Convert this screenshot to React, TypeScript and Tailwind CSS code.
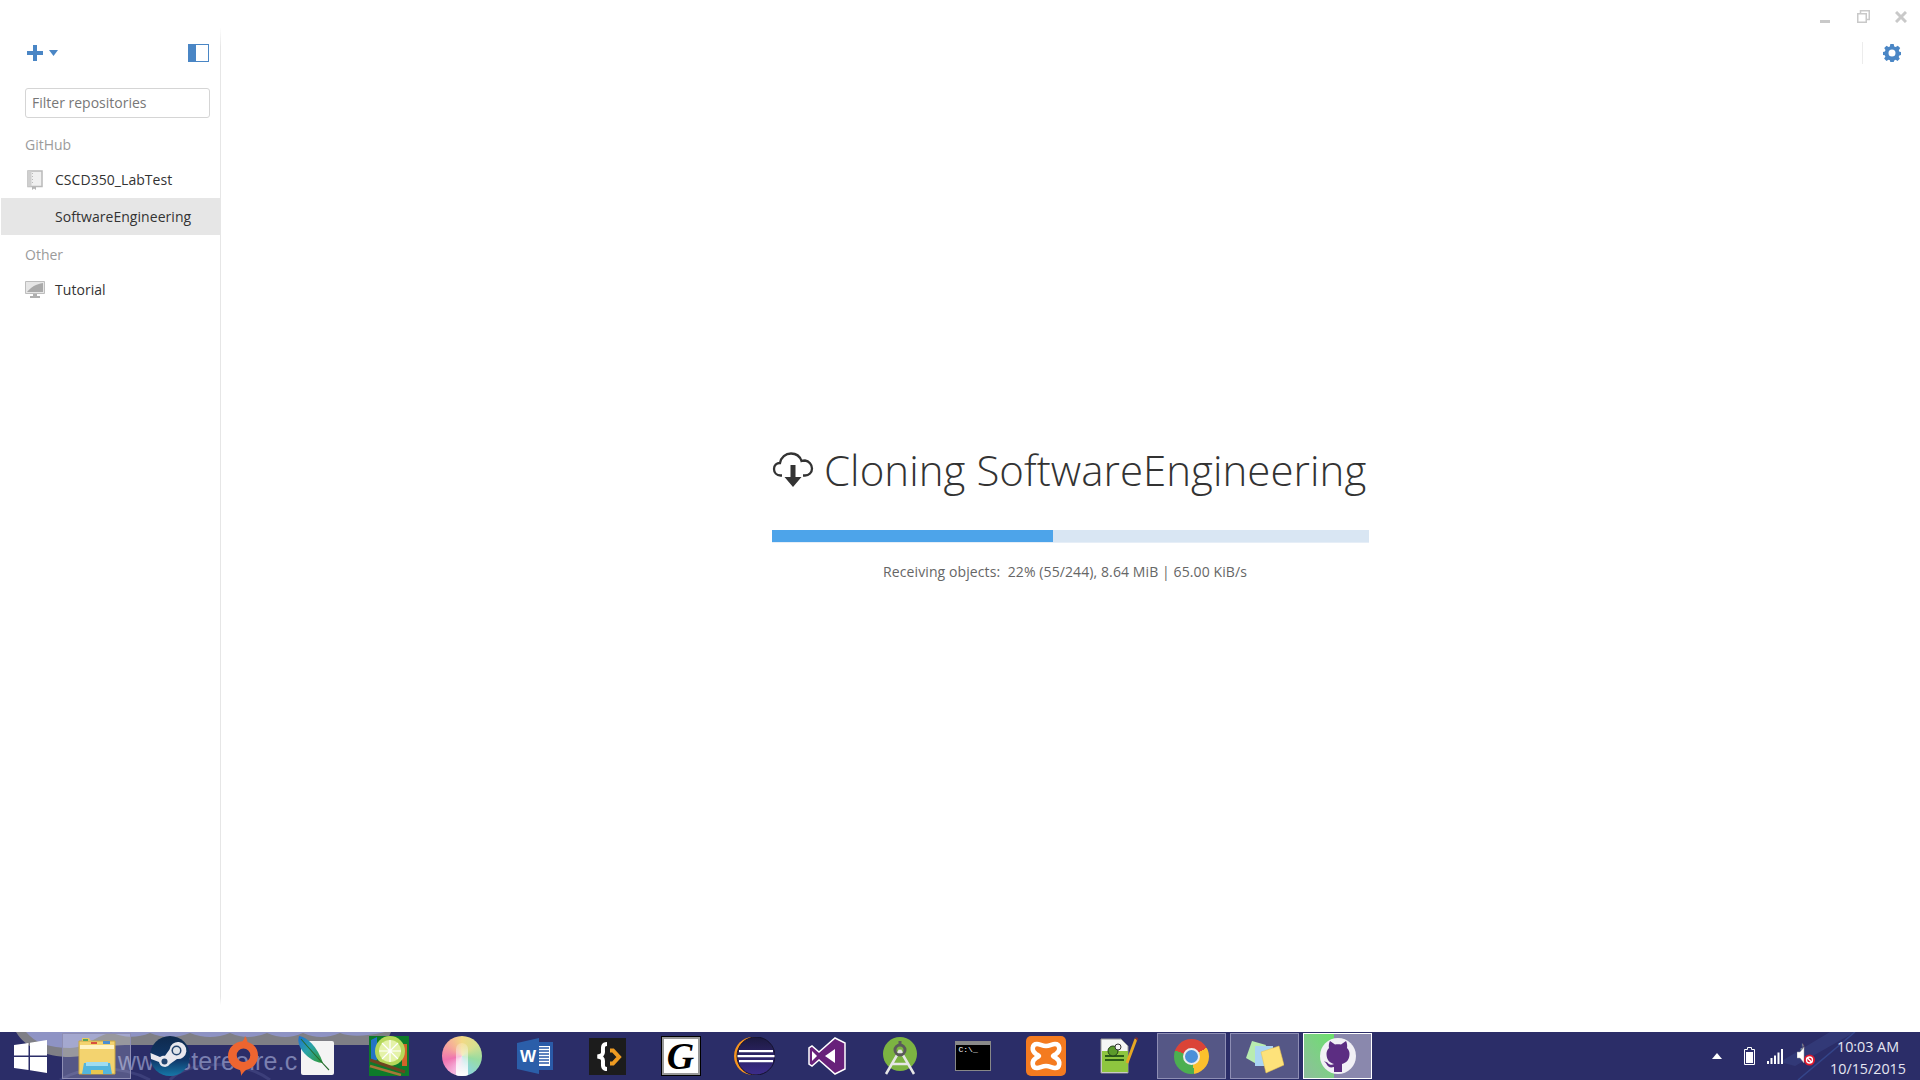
const sans = { fontFamily: '"Open Sans", sans-serif' };

function CloudIcon() {
  return (
    <svg width="42" height="38" viewBox="0 0 42 38" fill="none">
      <path d="M10 24.500H8.500C4.500 24.500 2 21.500 2 18C2 14.500 4.500 12 8 12C9 6.500 13.500 2.500 19 2.500C24 2.500 28 5.500 29.500 10C30.500 9.600 31.500 9.500 33 9.500C37 10 40 13.500 40 17.500C40 21.500 37 24.500 33 24.500H31" stroke="#333" strokeWidth="2.300" />
      <path d="M18.500 14H23.500V26H29.500L21 36L12.500 26H18.500Z" fill="#333" />
    </svg>
  );
}

function GearIcon() {
  return (
    <svg width="18" height="18" viewBox="0 0 18 18" fill="#4a86c5">
      <path fillRule="evenodd" d="M7.300 0H10.700L11.200 2.500L12.700 3.100L14.800 1.700L17.200 4.100L15.800 6.200L16.400 7.700L18 8V11L16.300 11.400L15.700 12.900L16.800 14.700L14.500 17L12.700 15.800L11.200 16.400L10.700 18H7.300L6.900 16.300L5.400 15.700L3.500 17L1.100 14.600L2.400 12.800L1.800 11.300L0 11V8L1.900 7.500L2.500 6L1.200 4.100L3.600 1.700L5.500 3L6.900 2.400ZM9 5.500A3.500 3.500 0 1 0 9 12.500A3.500 3.500 0 1 0 9 5.500Z" />
    </svg>
  );
}

function BookIcon() {
  return (
    <svg width="16" height="20" viewBox="0 0 16 20">
      <path d="M1 1H15V16.500H1Z" fill="#f0f0f0" stroke="#b9b9b9" strokeWidth="1.500" />
      <path d="M1 1H4.500V16.500H1Z" fill="#cfcfcf" />
      <path d="M5.500 3V13" stroke="#bbb" strokeDasharray="1 2" />
      <path d="M5 17H9V20L7 18.500L5 20Z" fill="#b5b5b5" />
    </svg>
  );
}

function MonitorIcon() {
  return (
    <svg width="20" height="18" viewBox="0 0 20 18">
      <path d="M0.500 0.500H19.500V12.500H0.500Z" fill="#e6e6e6" stroke="#bdbdbd" />
      <path d="M2 11C6 6 11 3 18 2V11Z" fill="#a9a9a9" />
      <path d="M8 13H12V15H15V17H5V15H8Z" fill="#b0b0b0" />
    </svg>
  );
}

function WindowsLogo() {
  return (
    <svg width="33" height="33" viewBox="0 0 33 33" fill="#fff">
      <path d="M0 5L14.500 3V15.500H0ZM16 2.800L33 0V15.500H16ZM0 17H14.500V30L0 28ZM16 17H33V33L16 30.200Z" />
    </svg>
  );
}

function ExplorerIcon() {
  return (
    <svg width="40" height="38" viewBox="0 0 40 38">
      <path d="M2 4H38V37H2Z" fill="#f3d36f" stroke="#c9a642" />
      <path d="M5 1H12L14 4H5Z" fill="#e6c860" />
      <path d="M6 2H11V4H6Z" fill="#5aa65a" />
      <path d="M14 5H20V7H14Z" fill="#d9503c" />
      <path d="M26 4H33V7H26Z" fill="#4c8fd0" />
      <path d="M3 8H37V12H3Z" fill="#fff3c4" />
      <path d="M7 26H33L35 37H5Z" fill="#53b5dd" />
      <path d="M9 25H31V29H9Z" fill="#9fdcf0" />
      <path d="M14 33H26V37H14Z" fill="#e8c64f" />
    </svg>
  );
}

function SteamIcon() {
  return (
    <svg width="40" height="40" viewBox="0 0 40 40">
      <defs>
        <linearGradient id="steamGrad" x1="0" y1="0" x2="0" y2="1">
          <stop offset="0" stopColor="#0f2a4d" />
          <stop offset="0.6" stopColor="#10386a" />
          <stop offset="1" stopColor="#1678a8" />
        </linearGradient>
      </defs>
      <circle cx="20" cy="20" r="20" fill="url(#steamGrad)" />
      <path d="M0.500 17L10 21C11.500 20 13 19.500 15 19.700L19.500 13.500A8.500 8.500 0 1 1 27 23L20 28A6 6 0 0 1 9 26L1 23Z" fill="#e8e8ee" />
      <circle cx="26.500" cy="14.500" r="5" fill="#23446e" />
      <circle cx="26.500" cy="14.500" r="3.500" fill="#dfe4ea" />
      <circle cx="14.500" cy="25.500" r="3" fill="#23446e" />
    </svg>
  );
}

function OriginIcon() {
  return (
    <svg width="30" height="40" viewBox="0 0 30 40">
      <path fillRule="evenodd" d="M17 0C16.800 2 16 3.800 14.500 5.200C6 6 0 12 0 20C0 27 5 32.500 12 34C12.800 36 13.300 38 13 40C14.300 37.500 16 35.500 18 34C25 32.500 30 27 30 19.500C30 12.500 25.500 7.500 19.500 6C19.200 4 18.500 2 17 0ZM15.500 12.500A6.800 6.800 0 1 0 15.500 26.100A6.800 6.800 0 1 0 15.500 12.500Z" fill="#ee6530" />
    </svg>
  );
}

function FeatherIcon() {
  return (
    <svg width="36" height="40" viewBox="0 0 36 40">
      <defs>
        <linearGradient id="featherGrad" x1="0" y1="0" x2="1" y2="1">
          <stop offset="0" stopColor="#1e6ed0" />
          <stop offset="0.45" stopColor="#2aa3a8" />
          <stop offset="1" stopColor="#2f9a36" />
        </linearGradient>
      </defs>
      <rect x="3" y="5" width="33" height="34" rx="2" fill="#f4f4f4" />
      <path d="M1 0C9 1 19 10 25 27C20 27 13 24 8 19C2 13 -1 7 1 0Z" fill="url(#featherGrad)" />
      <path d="M3 3C9 10 17 19 31 34" stroke="#276b2e" strokeWidth="1.100" fill="none" />
    </svg>
  );
}

function LimeIcon() {
  return (
    <svg width="40" height="40" viewBox="0 0 40 40">
      <rect x="0" y="0" width="40" height="40" fill="#0d7a2a" />
      <path d="M2 4L8 1L8 24L2 26Z" fill="#2474c6" />
      <path d="M33 8H38V30H33Z" fill="#d1632a" />
      <circle cx="21" cy="15" r="15" fill="#b6d85a" />
      <circle cx="21" cy="15" r="11" fill="#e4f2a8" />
      <path d="M21 4V26M10 15H32M13 7L29 23M29 7L13 23" stroke="#fff" strokeWidth="1.200" />
      <path d="M1 24L36 36" stroke="#6f4420" strokeWidth="3" />
      <path d="M1 30L32 39" stroke="#a77638" strokeWidth="2.500" />
    </svg>
  );
}

function ColorBallIcon() {
  return (
    <div className="relative h-10 w-10 overflow-hidden rounded-full bg-[conic-gradient(#f3d985,#d8e08f,#98dca0,#8fd6d8,#f6b6df,#ef74b0,#f6a99a,#f3d985)]">
      <div className="absolute left-[14px] top-[7px] h-[33px] w-[12px] rounded-t-full bg-gradient-to-b from-white/20 to-white" />
    </div>
  );
}

function WordIcon() {
  return (
    <svg width="36" height="36" viewBox="0 0 36 36">
      <path d="M12 4H36V32H12Z" fill="#2a5aa8" />
      <path d="M20 8H33V28H20Z" fill="#fff" />
      <path d="M21 10H32M21 13H32M21 16H32M21 19H32M21 22H32M21 25H32" stroke="#2a5aa8" strokeWidth="1.500" />
      <path d="M0 5L22 0V36L0 31Z" fill="#2b5ea9" />
      <text x="3" y="24" fill="#fff" fontSize="17" fontWeight="700" fontFamily="Liberation Sans, sans-serif">W</text>
    </svg>
  );
}

function FlashBuilderIcon() {
  return (
    <svg width="37" height="37" viewBox="0 0 37 37">
      <rect width="37" height="37" fill="#1c1c1c" />
      <path d="M18 6C13 6 14 10 14 14C14 17 12.500 18 8.500 18.500C12.500 19 14 20 14 23C14 27 13 31 18 31" stroke="#fff" strokeWidth="4" fill="none" />
      <path d="M21 12.500H24L30 19L24 25.500H21" stroke="#ee9b22" strokeWidth="4" fill="none" />
    </svg>
  );
}

function GIcon() {
  return (
    <div className="flex h-10 w-10 items-center justify-center border border-black bg-white outline outline-2 -outline-offset-[3px] outline-[#999]">
      <span className="text-[38px] font-bold italic leading-none text-black" style={{ fontFamily: '"Liberation Serif", serif' }}>G</span>
    </div>
  );
}

function EclipseIcon() {
  return (
    <svg width="42" height="38" viewBox="0 0 42 38">
      <defs>
        <linearGradient id="eclipseGrad" x1="0" y1="0" x2="0" y2="1">
          <stop offset="0" stopColor="#1c1a3f" />
          <stop offset="1" stopColor="#3d2d8c" />
        </linearGradient>
      </defs>
      <circle cx="20" cy="19" r="19" fill="#f7941e" />
      <circle cx="23" cy="19" r="19" fill="url(#eclipseGrad)" stroke="#14122e" />
      <path d="M6 13H40V15.200H6ZM4.500 18H41.500V20.200H4.500ZM6 23H40V25.200H6Z" fill="#fff" />
    </svg>
  );
}

function VisualStudioIcon() {
  return (
    <svg width="38" height="38" viewBox="0 0 38 38">
      <path d="M27 1L37 6V32L27 37L11 23L4 29L1 27V11L4 9L11 15Z" fill="#68217a" stroke="#fff" strokeWidth="1.500" />
      <path d="M27 12V26L17 19Z" fill="#fff" />
      <path d="M4 14L9 19L4 24Z" fill="#fff" />
    </svg>
  );
}

function AndroidStudioIcon() {
  return (
    <svg width="36" height="38" viewBox="0 0 36 38">
      <circle cx="18" cy="17" r="17" fill="#7cb342" />
      <path d="M18 13L4 37M18 13L32 37M9 27H27" stroke="#e6e6e6" strokeWidth="2.500" fill="none" />
      <circle cx="18" cy="13" r="5" fill="none" stroke="#5a5a5a" strokeWidth="3" />
      <path d="M18 4V8" stroke="#5a5a5a" strokeWidth="3" />
    </svg>
  );
}

function CmdIcon() {
  return (
    <div className="flex h-[30px] w-9 flex-col border border-[#888] bg-black">
      <div className="h-[3px] bg-[#8a8a8a]" />
      <span className="pl-[3px] text-[8px] leading-[10px] text-white" style={{ fontFamily: '"Liberation Mono", monospace' }}>C:\_</span>
    </div>
  );
}

function XamppIcon() {
  return (
    <svg width="40" height="40" viewBox="0 0 40 40">
      <rect width="40" height="40" rx="5" fill="#f47b20" />
      <path d="M11 8C6 8 5 15 10 18C12 19 13 19.500 13 20C13 20.500 12 21 10 22C5 25 6 32 11 32C14 32 16 30 20 30C24 30 26 32 29 32C34 32 35 25 30 22C28 21 27 20.500 27 20C27 19.500 28 19 30 18C35 15 34 8 29 8C26 8 24 10 20 10C16 10 14 8 11 8Z" fill="none" stroke="#fff" strokeWidth="4.500" />
    </svg>
  );
}

function NotepadIcon() {
  return (
    <svg width="38" height="38" viewBox="0 0 38 38">
      <path d="M1 2H21L28 9V36H1Z" fill="#f5f5f5" stroke="#9a9a9a" />
      <path d="M2 14H28V35H2Z" fill="#8ec63f" />
      <path d="M5 19H24M5 23H24" stroke="#2b5d18" strokeWidth="2" />
      <circle cx="13" cy="14" r="5" fill="#5b9b2a" stroke="#23401a" />
      <circle cx="18" cy="10" r="3" fill="#f5f5f5" stroke="#333" />
      <path d="M27 26L36 2" stroke="#e5a823" strokeWidth="3" />
      <path d="M35 0L38 1L37 4Z" fill="#8b2a2a" />
    </svg>
  );
}

function ChromeIcon() {
  return (
    <div className="relative flex h-[35px] w-[35px] items-center justify-center rounded-full bg-[conic-gradient(from_-70deg,#db4437_0deg_130deg,#fbc02d_130deg_240deg,#4caf50_240deg_360deg)]">
      <div className="h-[17px] w-[17px] rounded-full border-[2px] border-[#ececec] bg-[#4a90d9]" />
    </div>
  );
}

function NotesIcon() {
  return (
    <svg width="38" height="36" viewBox="0 0 38 36">
      <path d="M6 3L20 7L14 28L0 20Z" fill="#b8ecb0" />
      <path d="M9 8H27V28H9Z" fill="#a9d4f3" />
      <path d="M15 14L33 8L38 27L20 35Z" fill="#fde27a" stroke="#e8c14f" strokeWidth="0.500" />
    </svg>
  );
}

function GithubIcon() {
  return (
    <div className="flex h-9 w-9 items-center justify-center rounded-full bg-[#f1f0f5]">
      <svg width="28" height="32" viewBox="0 0 28 32" fill="#5c2d82">
        <path d="M6 1L11 4.500C13 4 15 4 17 4.500L22 1C23 3 23.500 5.500 23 8C25 10 25.500 12 25.500 14C25.500 20 22 23 18 24V32H10V27C6 28 4 27 2.500 24C2 23 1 22 0 21.500C3 21 4 24 6 24.500C7.500 25 9 24.500 10 24C6 23 2.500 20 2.500 14C2.500 12 3 10 5 8C4.500 5.500 5 3 6 1Z" />
      </svg>
    </div>
  );
}

const pinned = [
  { id: "explorer", icon: <ExplorerIcon />, box: "running" },
  { id: "steam", icon: <SteamIcon /> },
  { id: "origin", icon: <OriginIcon /> },
  { id: "feather", icon: <FeatherIcon /> },
  { id: "lime", icon: <LimeIcon /> },
  { id: "color", icon: <ColorBallIcon /> },
  { id: "word", icon: <WordIcon /> },
  { id: "flash", icon: <FlashBuilderIcon /> },
  { id: "g", icon: <GIcon /> },
  { id: "eclipse", icon: <EclipseIcon /> },
  { id: "vs", icon: <VisualStudioIcon /> },
  { id: "android", icon: <AndroidStudioIcon /> },
  { id: "cmd", icon: <CmdIcon /> },
  { id: "xampp", icon: <XamppIcon /> },
  { id: "notepad", icon: <NotepadIcon /> },
  { id: "chrome", icon: <ChromeIcon />, box: "running" },
  { id: "notes", icon: <NotesIcon />, box: "running" },
  { id: "github", icon: <GithubIcon />, box: "active" },
];

function Wallpaper() {
  return (
    <>
      <svg className="absolute left-0 top-0" width="400" height="48" viewBox="0 0 400 48" fill="none">
        <path d="M60 48C80 35 120 32 150 48M170 48C185 30 240 25 270 48" stroke="#3c3f7a" strokeWidth="3" />
        <path d="M16 0C25 15 45 25 70 25C90 25 100 13 125 13H382C386 10 389 5 391 0Z" fill="#7f7f86" />
        <path d="M26 0C35 11 50 16 70 16C88 16 98 0 118 0Z" fill="#8e93c4" />
        <path d="M110 0Q130 9 150 1Q170 9 190 1Q210 9 230 1Q248 9 267 1Q285 9 303 1Q321 9 340 1Q355 7 385 0Z" fill="#8e93c4" />
      </svg>
      <span className="absolute left-[118px] top-[15px] text-[25px] leading-7 tracking-[0.2px] text-[#7b80b0]" style={{ fontFamily: '"Liberation Sans", sans-serif' }}>www.stereoire.c</span>
      <svg className="absolute right-0 top-0" width="240" height="48" viewBox="0 0 240 48" fill="none">
        <path d="M100 30L150 0H175L115 34Z" fill="#3c4a8a" opacity="0.45" />
        <path d="M118 48L175 0" stroke="#3a55a0" strokeWidth="1.500" opacity="0.6" />
      </svg>
    </>
  );
}

function Taskbar() {
  return (
    <div className="relative flex h-12 shrink-0 items-center overflow-hidden bg-[#2b2d68]">
      <Wallpaper />
      <div className="relative flex w-[60px] shrink-0 justify-center">
        <WindowsLogo />
      </div>
      {pinned.map((item) => (
        <div key={item.id} className="relative flex h-12 w-[73px] shrink-0 items-center justify-center">
          {item.box === "running" && <div className="absolute inset-x-[2px] inset-y-px border border-[#8e8eb4] bg-white/20" />}
          {item.box === "active" && (
            <div className="absolute inset-x-[2px] inset-y-px flex border border-white">
              <div className="w-[45%] bg-gradient-to-tr from-[#8ebd9c] to-[#69e06a]" />
              <div className="flex-1 bg-[#8a88ad]" />
            </div>
          )}
          <div className="relative">{item.icon}</div>
        </div>
      ))}
      <div className="relative ml-auto flex items-center">
        <svg width="10" height="6" viewBox="0 0 10 6" fill="#fff" className="mr-[22px]">
          <path d="M5 0L10 6H0Z" />
        </svg>
        <svg width="11" height="18" viewBox="0 0 11 18" fill="none" className="mr-[12px]">
          <path d="M3.500 0.500H7.500V2.500H10.500V17.500H0.500V2.500H3.500Z" stroke="#fff" />
          <path d="M2 5H9V16H2Z" fill="#fff" />
        </svg>
        <svg width="16" height="15" viewBox="0 0 16 15" fill="#fff" className="mr-[14px]">
          <path d="M0 12H2V15H0ZM3.500 9H5.500V15H3.500ZM7 6.500H9V15H7ZM10.500 3.500H12.500V15H10.500ZM14 0H16V15H14Z" />
        </svg>
        <div className="relative mr-[11px]">
          <span className="absolute left-[2px] top-[-6px] text-[12px] leading-none text-[#8f8f9a]" style={sans}>♪</span>
          <svg width="18" height="20" viewBox="0 0 18 20">
            <path d="M0 6H3L7 1V17L3 12H0Z" fill="#fff" stroke="#999" strokeWidth="0.500" />
            <circle cx="12.500" cy="14" r="5.500" fill="#e0182d" />
            <circle cx="12.500" cy="14" r="3" fill="none" stroke="#fff" strokeWidth="1.300" />
            <path d="M10 11.500L15 16.500" stroke="#fff" strokeWidth="1.500" />
          </svg>
        </div>
        <div className="mr-[10px] flex w-[84px] flex-col items-center pt-[3px] text-[14.300px] leading-[22px] text-[#e6e7f2]" style={sans}>
          <span>10:03 AM</span>
          <span>10/15/2015</span>
        </div>
      </div>
    </div>
  );
}

function RepoRow({ name, icon, selected }: { name: string; icon?: React.ReactNode; selected?: boolean }) {
  return (
    <div className={`flex h-[37px] items-center ${selected ? "bg-[#e6e6e6]" : ""}`}>
      <div className="flex w-[54px] justify-center pl-[14px]">{icon}</div>
      <span className="text-[14px] tracking-[0.05px] text-[#333]">{name}</span>
    </div>
  );
}

export default function App() {
  return (
    <div className="flex h-screen w-full flex-col bg-white" style={sans}>
      <div className="flex min-h-0 flex-1">
        <aside className="mb-[27px] ml-px mt-[27px] flex w-[219px] shrink-0 flex-col">
          <div className="flex items-center justify-between pl-[26px] pr-[11px] pt-[17px]">
            <div className="flex items-center gap-[6px]">
              <svg width="16" height="16" viewBox="0 0 16 16" fill="#4a86c5">
                <path d="M6 0H10V6H16V10H10V16H6V10H0V6H6Z" />
              </svg>
              <svg width="9" height="6" viewBox="0 0 9 6" fill="#4a86c5">
                <path d="M0 0H9L4.500 6Z" />
              </svg>
            </div>
            <div className="flex h-[18px] w-[21px] border border-[#4a86c5]">
              <div className="w-[7px] bg-[#4a86c5]" />
            </div>
          </div>
          <div className="ml-[24px] mr-[10px] mt-[26px] flex h-[30px] items-center rounded-[3px] border border-[#d5d5d5] px-[6px] pb-[2px] text-[14px] text-[#777]">
            Filter repositories
          </div>
          <div className="ml-[24px] mt-[9px] flex h-[34px] items-center text-[14px] text-[#9b9b9b]">GitHub</div>
          <RepoRow name="CSCD350_LabTest" icon={<BookIcon />} />
          <RepoRow name="SoftwareEngineering" selected />
          <div className="ml-[24px] mt-[2px] flex h-[34px] items-center text-[14px] text-[#9b9b9b]">Other</div>
          <RepoRow name="Tutorial" icon={<MonitorIcon />} />
        </aside>
        <div className="mb-[27px] mt-[27px] w-px shrink-0 bg-[linear-gradient(to_bottom,transparent,#e6e6e6_20px,#e6e6e6_calc(100%-8px),transparent)]" />
        <main className="flex min-w-0 flex-1 flex-col">
          <div className="flex h-[70px] shrink-0 flex-col items-end">
            <div className="flex h-[32px] items-center pr-[13px] pt-[1px]">
              <div className="mr-[27px] mt-[9px] h-[3px] w-[10px] bg-[#c9c9c9]" />
              <svg width="13" height="13" viewBox="0 0 13 13" fill="none" stroke="#c9c9c9" strokeWidth="1.500" className="mr-[25px]">
                <path d="M0.750 3.750H9.250V12.250H0.750Z" />
                <path d="M3.500 3V0.750H12.250V9.500H10" />
              </svg>
              <svg width="12" height="12" viewBox="0 0 12 12" stroke="#c9c9c9" strokeWidth="3">
                <path d="M1 1L11 11M11 1L1 11" />
              </svg>
            </div>
            <div className="mt-[10px] flex items-center pr-[19px]">
              <div className="mr-[20px] h-[22px] w-px bg-[#ececec]" />
              <GearIcon />
            </div>
          </div>
          <div className="flex flex-1 flex-col items-center pt-[372px]">
            <div className="flex w-[597px] flex-col">
              <div className="flex h-[56px] items-center gap-[10px]">
                <CloudIcon />
                <h1 className="text-[42px] font-light leading-none tracking-[0.05px] text-[#333]">Cloning SoftwareEngineering</h1>
              </div>
              <div className="mt-[32px] h-[13px] border-b border-b-[#e6eef7] bg-[#d9e6f3]">
                <div className="h-full w-[47%] bg-[#4da4ea]" />
              </div>
              <p className="mt-[19px] pr-[11px] text-center text-[14px] leading-5 tracking-[0.1px] text-[#666]">Receiving objects:&nbsp; 22% (55/244), 8.64 MiB | 65.00 KiB/s</p>
            </div>
          </div>
        </main>
      </div>
      <Taskbar />
    </div>
  );
}
